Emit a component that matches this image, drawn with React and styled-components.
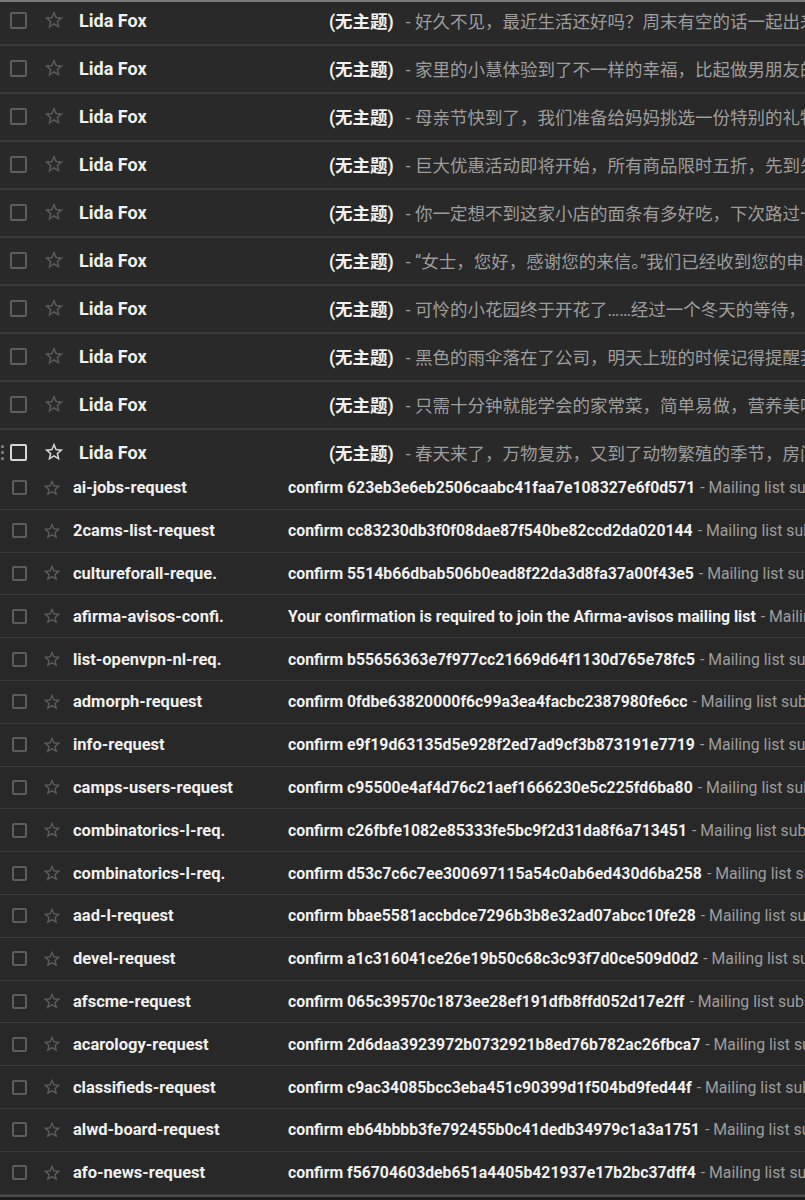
import React from "react";
import styled, { createGlobalStyle } from "styled-components";

const Global = createGlobalStyle`
  html, body { margin: 0; padding: 0; background: #1d1d1d; }
  body { font-family: Roboto, "Noto Sans CJK SC", sans-serif; -webkit-font-smoothing: antialiased; }
  * { box-sizing: border-box; }
`;

const Page = styled.div`
  width: 805px;
  height: 1200px;
  display: flex;
  flex-direction: column;
  overflow: hidden;
  background: #1d1d1d;
`;

const TopSection = styled.section`
  height: 467px;
  flex: none;
  border-top: 2px solid #7a7a7a;
  background: #292929;
  overflow: hidden;
`;

const TopList = styled.div`
  margin-top: -4px;
  display: flex;
  flex-direction: column;
`;

const TopRow = styled.div`
  position: relative;
  height: 48px;
  flex: none;
  display: flex;
  align-items: center;
  padding: 0 0 2px 10px;
  border-bottom: 2px solid #393939;
  white-space: nowrap;
  overflow: hidden;
`;

const BottomSection = styled.section`
  flex: none;
  background: #282828;
  display: flex;
  flex-direction: column;
`;

const BottomRow = styled.div`
  height: 42.8px;
  flex: none;
  display: flex;
  align-items: center;
  padding: 0 0 0 12px;
  border-bottom: 1px solid #3a3a3a;
  white-space: nowrap;
  overflow: hidden;
`;

const Footer = styled.div`
  flex: 1;
  border-top: 2px solid #4c4c4c;
  background: #1c1c1c;
`;

const Check = styled.span`
  flex: none;
  width: ${(p) => p.$size}px;
  height: ${(p) => p.$size}px;
  border: 2px solid ${(p) => (p.$active ? "#d6d6d6" : "#5d5d5d")};
  border-radius: 2px;
`;

const StarBox = styled.span`
  flex: none;
  display: flex;
  margin-left: ${(p) => p.$ml}px;
  color: ${(p) => (p.$active ? "#dcdcdc" : "#5d5d5d")};
  svg { display: block; }
`;

const Sender = styled.span`
  flex: none;
  width: ${(p) => p.$w}px;
  margin-left: ${(p) => p.$ml}px;
  font-size: ${(p) => p.$fs}px;
  font-weight: 700;
  color: #f0f0f0;
  overflow: hidden;
`;

const Line = styled.span`
  flex: 1;
  min-width: 0;
  overflow: hidden;
  display: flex;
  align-items: baseline;
  font-size: ${(p) => p.$fs}px;
`;

const Subject = styled.span`
  flex: none;
  font-weight: 700;
  color: #f0f0f0;
  font-family: Roboto, "Noto Sans CJK SC", sans-serif;
`;

const Snippet = styled.span`
  flex: none;
  margin-left: ${(p) => p.$gap}px;
  font-weight: 400;
  color: #9d9d9d;
  font-family: Roboto, "Noto Sans CJK SC", sans-serif;
`;

const Handle = styled.span`
  position: absolute;
  left: 1px;
  top: 15px;
  display: flex;
  flex-direction: column;
  gap: 3px;
  i {
    display: block;
    width: 3px;
    height: 3px;
    border-radius: 50%;
    background: #8a8a8a;
  }
`;

const StarIcon = ({ size }) => (
  <svg width={size} height={size} viewBox="0 0 24 24" fill="currentColor">
    <path d="M22 9.24l-7.19-.62L12 2 9.19 8.63 2 9.24l5.46 4.73L5.82 21 12 17.27 18.18 21l-1.63-7.03L22 9.24zM12 15.4l-3.76 2.27 1-4.28-3.32-2.88 4.38-.38L12 6.1l1.71 4.04 4.38.38-3.32 2.88 1 4.28L12 15.4z" />
  </svg>
);

const topSnippets = [
  "好久不见，最近生活还好吗？周末有空的话一起出来喝杯咖啡聊聊近况",
  "家里的小慧体验到了不一样的幸福，比起做男朋友的时候更加用心了",
  "母亲节快到了，我们准备给妈妈挑选一份特别的礼物，你有什么建议",
  "巨大优惠活动即将开始，所有商品限时五折，先到先得，欢迎选购",
  "你一定想不到这家小店的面条有多好吃，下次路过一定要去尝一尝",
  "“女士，您好，感谢您的来信。”我们已经收到您的申请，将尽快处理",
  "可怜的小花园终于开花了……经过一个冬天的等待，春天的颜色回来了",
  "黑色的雨伞落在了公司，明天上班的时候记得提醒我带回家去",
  "只需十分钟就能学会的家常菜，简单易做，营养美味，全家都爱吃",
  "春天来了，万物复苏，又到了动物繁殖的季节，房间里的植物也发芽了",
];

const bottomRows = [
  ["ai-jobs-request", "confirm 623eb3e6eb2506caabc41faa7e108327e6f0d571"],
  ["2cams-list-request", "confirm cc83230db3f0f08dae87f540be82ccd2da020144"],
  ["cultureforall-reque.", "confirm 5514b66dbab506b0ead8f22da3d8fa37a00f43e5"],
  ["afirma-avisos-confi.", "Your confirmation is required to join the Afirma-avisos mailing list"],
  ["list-openvpn-nl-req.", "confirm b55656363e7f977cc21669d64f1130d765e78fc5"],
  ["admorph-request", "confirm 0fdbe63820000f6c99a3ea4facbc2387980fe6cc"],
  ["info-request", "confirm e9f19d63135d5e928f2ed7ad9cf3b873191e7719"],
  ["camps-users-request", "confirm c95500e4af4d76c21aef1666230e5c225fd6ba80"],
  ["combinatorics-l-req.", "confirm c26fbfe1082e85333fe5bc9f2d31da8f6a713451"],
  ["combinatorics-l-req.", "confirm d53c7c6c7ee300697115a54c0ab6ed430d6ba258"],
  ["aad-l-request", "confirm bbae5581accbdce7296b3b8e32ad07abcc10fe28"],
  ["devel-request", "confirm a1c316041ce26e19b50c68c3c93f7d0ce509d0d2"],
  ["afscme-request", "confirm 065c39570c1873ee28ef191dfb8ffd052d17e2ff"],
  ["acarology-request", "confirm 2d6daa3923972b0732921b8ed76b782ac26fbca7"],
  ["classifieds-request", "confirm c9ac34085bcc3eba451c90399d1f504bd9fed44f"],
  ["alwd-board-request", "confirm eb64bbbb3fe792455b0c41dedb34979c1a3a1751"],
  ["afo-news-request", "confirm f56704603deb651a4405b421937e17b2bc37dff4"],
];

export default function App() {
  return (
    <Page>
      <Global />
      <TopSection>
        <TopList>
          {topSnippets.map((s, i) => {
            const active = i === topSnippets.length - 1;
            return (
              <TopRow key={i}>
                {active && (
                  <Handle>
                    <i />
                    <i />
                    <i />
                  </Handle>
                )}
                <Check $size={17} $active={active} />
                <StarBox $ml={16} $active={active}>
                  <StarIcon size={22} />
                </StarBox>
                <Sender $w={250} $ml={14} $fs={18}>
                  Lida Fox
                </Sender>
                <Line $fs={17.5}>
                  <Subject>(无主题)</Subject>
                  <Snippet $gap={12}>- {s}</Snippet>
                </Line>
              </TopRow>
            );
          })}
        </TopList>
      </TopSection>
      <BottomSection>
        {bottomRows.map(([from, subj], i) => (
          <BottomRow key={i}>
            <Check $size={15} />
            <StarBox $ml={15}>
              <StarIcon size={20} />
            </StarBox>
            <Sender $w={215} $ml={11} $fs={16.5}>
              {from}
            </Sender>
            <Line $fs={15.8}>
              <Subject>{subj}</Subject>
              <Snippet $gap={5}>- Mailing list subscription confirmation notice</Snippet>
            </Line>
          </BottomRow>
        ))}
      </BottomSection>
      <Footer />
    </Page>
  );
}
